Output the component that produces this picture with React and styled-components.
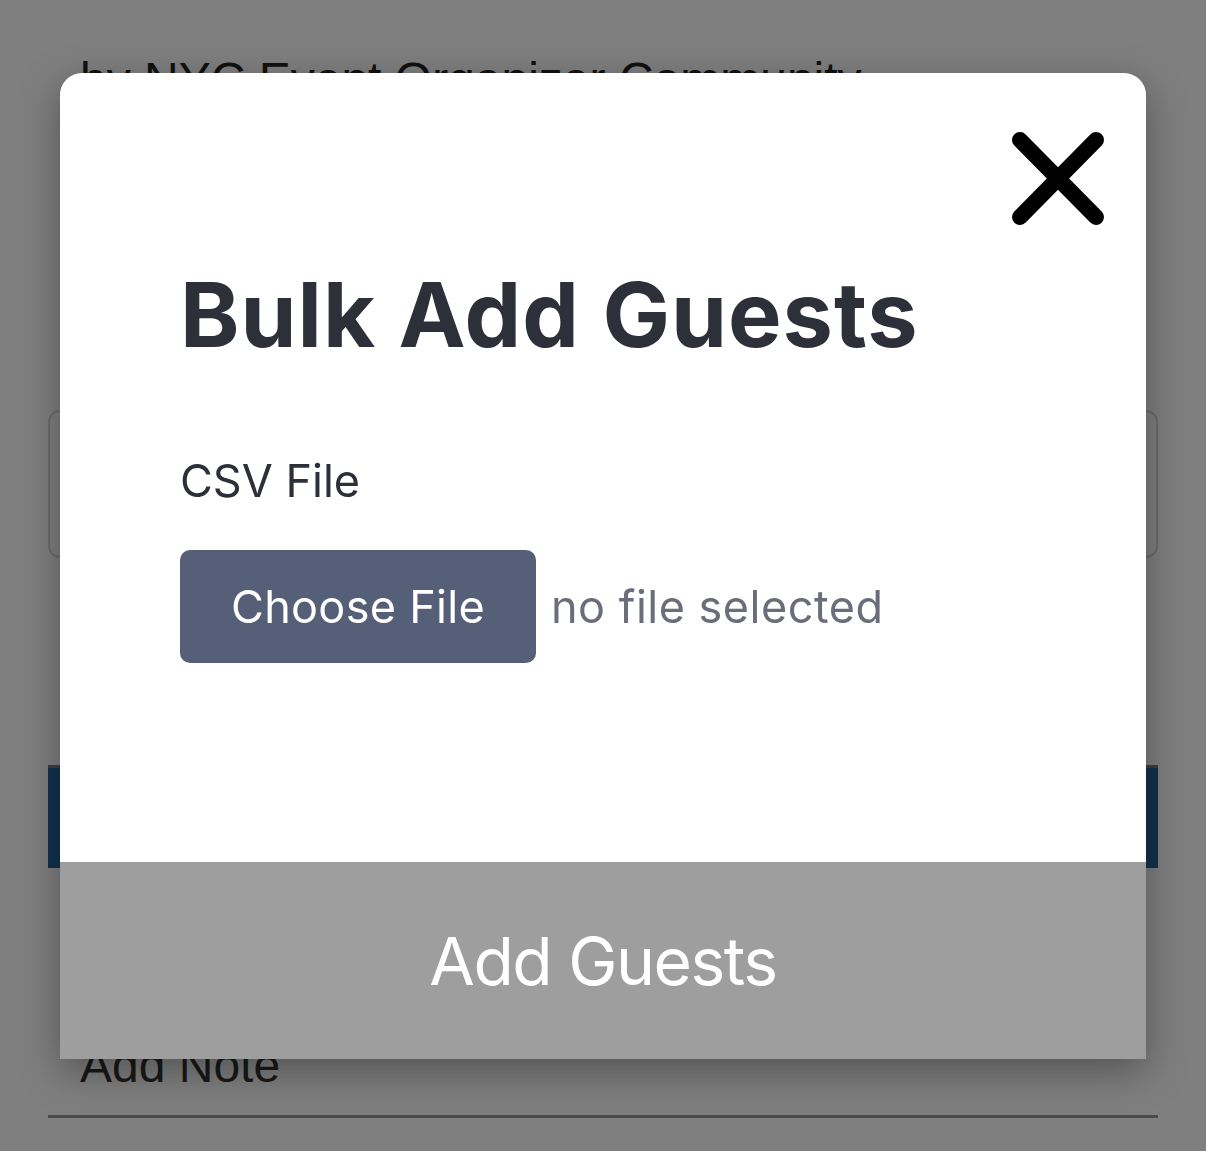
import React from 'react';
import styled, { createGlobalStyle } from 'styled-components';

const GlobalStyle = createGlobalStyle`
  html, body {
    margin: 0;
    padding: 0;
    background: #ffffff;
    font-family: Inter, "Noto Sans", sans-serif;
  }
`;

const Page = styled.div`
  width: 1206px;
  height: 1151px;
  overflow: hidden;
  position: relative;
  padding: 0 48px;
  box-sizing: border-box;
`;

const Organizer = styled.div`
  padding: 52px 0 0 32px;
  font-family: "Liberation Sans", sans-serif;
  font-size: 48px;
  line-height: 56px;
  color: #222;
`;

const SearchBox = styled.div`
  margin-top: 302px;
  height: 148px;
  border: 2px solid #d8d8e0;
  border-radius: 12px;
  box-sizing: border-box;
`;

const ActionBar = styled.div`
  margin-top: 207px;
  height: 103px;
  background: #24659f;
  border-top: 3px solid #747e90;
  box-sizing: border-box;
`;

const NoteField = styled.div`
  margin-top: 170px;
  padding: 0 0 21px 32px;
  font-family: "Liberation Sans", sans-serif;
  font-size: 48px;
  line-height: 56px;
  color: #333;
  border-bottom: 3px solid #949494;
`;

const Overlay = styled.div`
  position: fixed;
  inset: 0;
  background: rgba(0, 0, 0, 0.5);
`;

const Modal = styled.div`
  position: absolute;
  left: 60px;
  top: 73px;
  width: 1086px;
  height: 986px;
  background: #ffffff;
  border-radius: 22px 22px 0 0;
  overflow: hidden;
  display: flex;
  flex-direction: column;
  box-shadow: 0 12px 40px rgba(0, 0, 0, 0.35);
`;

const Body = styled.div`
  flex: 1;
  padding: 57px 40px 0 120px;
`;

const CloseRow = styled.div`
  display: flex;
  justify-content: flex-end;
`;

const CloseButton = styled.button`
  width: 96px;
  height: 96px;
  padding: 0;
  border: none;
  background: none;
  display: flex;
  cursor: pointer;
`;

const Title = styled.h1`
  margin: 34px 0 0;
  font-size: 90px;
  line-height: 110px;
  font-weight: 700;
  color: #2d3038;
  letter-spacing: 1px;
`;

const Label = styled.div`
  margin-top: 84px;
  font-size: 45px;
  line-height: 54px;
  color: #2d3038;
`;

const FileRow = styled.div`
  margin-top: 42px;
  display: flex;
  align-items: center;
  gap: 15px;
`;

const ChooseButton = styled.button`
  width: 356px;
  height: 113px;
  border: none;
  border-radius: 10px;
  background: #565f78;
  color: #ffffff;
  font-family: inherit;
  font-size: 45px;
  letter-spacing: 0.3px;
  padding: 0;
`;

const FileName = styled.span`
  font-size: 45px;
  letter-spacing: 0.5px;
  color: #6b6e7a;
`;

const Footer = styled.button`
  height: 197px;
  border: none;
  background: #9e9e9e;
  color: #ffffff;
  font-family: inherit;
  font-size: 66px;
  letter-spacing: -1.5px;
  font-weight: 400;
  width: 100%;
`;

const CloseIcon = () => (
  <svg width="96" height="96" viewBox="0 0 96 96">
    <path d="M10 10 L86 87 M86 10 L10 87" stroke="#000" strokeWidth="16" strokeLinecap="round" fill="none" />
  </svg>
);

export default function App() {
  return (
    <>
      <GlobalStyle />
      <Page>
        <Organizer>by NYC Event Organizer Community</Organizer>
        <SearchBox />
        <ActionBar />
        <NoteField>Add Note</NoteField>
        <Overlay />
        <Modal>
          <Body>
            <CloseRow>
              <CloseButton aria-label="Close">
                <CloseIcon />
              </CloseButton>
            </CloseRow>
            <Title>Bulk Add Guests</Title>
            <Label>CSV File</Label>
            <FileRow>
              <ChooseButton>Choose File</ChooseButton>
              <FileName>no file selected</FileName>
            </FileRow>
          </Body>
          <Footer>Add Guests</Footer>
        </Modal>
      </Page>
    </>
  );
}
